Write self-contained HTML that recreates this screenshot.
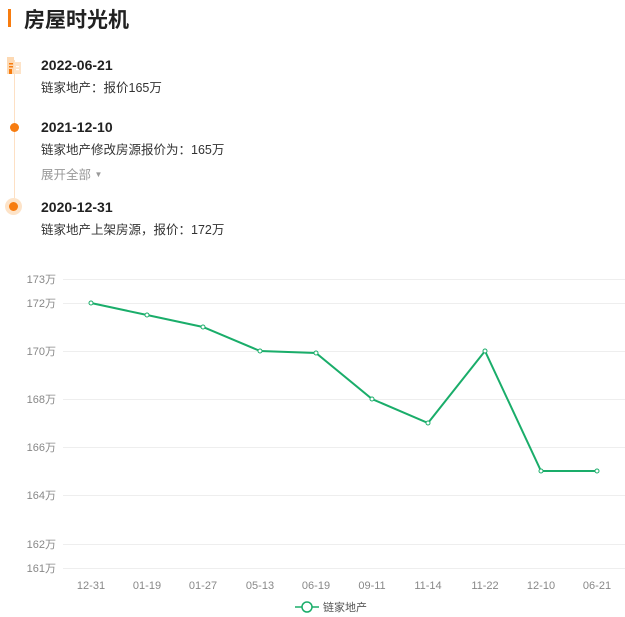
<!DOCTYPE html>
<html><head><meta charset="utf-8"><style>
body{margin:0;width:625px;height:617px;background:#fff;font-family:"Liberation Sans","Noto Sans CJK SC",sans-serif;position:relative;overflow:hidden}
.a{position:absolute;white-space:nowrap}
.d{font-weight:bold;font-size:14px;color:#222}
.t{font-size:12.5px;color:#333}
</style></head><body>
<div class="a" style="left:8px;top:9px;width:3px;height:18px;background:#f77c0f"></div>
<div class="a" style="left:24px;top:4px;font-size:21px;font-weight:bold;color:#222">房屋时光机</div>
<div class="a" style="left:14px;top:60px;width:1px;height:145px;background:#fde0c4"></div>
<svg class="a" style="left:5px;top:55px" width="18" height="20"><rect x="2" y="2" width="7" height="17" fill="#fdd9b3"/><rect x="9" y="7" width="7" height="12" fill="#fde3c8"/><rect x="4" y="8" width="4" height="1.5" fill="#f77c0f"/><rect x="4" y="11" width="4" height="1.5" fill="#f77c0f"/><rect x="4" y="14" width="3" height="5" fill="#f77c0f"/><rect x="11" y="11" width="3" height="1.2" fill="#fff"/><rect x="11" y="14" width="3" height="1.2" fill="#fff"/></svg>
<div class="a" style="left:10px;top:123px;width:9px;height:9px;border-radius:50%;background:#f77c0f"></div>
<div class="a" style="left:5px;top:198px;width:17px;height:17px;border-radius:50%;background:#fde3c8"></div>
<div class="a" style="left:9px;top:202px;width:9px;height:9px;border-radius:50%;background:#f77c0f"></div>
<div class="a d" style="left:41px;top:57px">2022-06-21</div>
<div class="a t" style="left:41px;top:77px">链家地产：报价165万</div>
<div class="a d" style="left:41px;top:119px">2021-12-10</div>
<div class="a t" style="left:41px;top:139px">链家地产修改房源报价为：165万</div>
<div class="a" style="left:41px;top:164px;font-size:12.5px;color:#999">展开全部 <span style="font-size:8px;vertical-align:2px">▼</span></div>
<div class="a d" style="left:41px;top:199px">2020-12-31</div>
<div class="a t" style="left:41px;top:219px">链家地产上架房源，报价：172万</div>
<svg class="a" style="left:0;top:0" width="625" height="617" font-family="Liberation Sans,Noto Sans CJK SC,sans-serif">
<g stroke="#eee" stroke-width="1">
<line x1="63" x2="625" y1="279.5" y2="279.5"/><line x1="63" x2="625" y1="303.5" y2="303.5"/><line x1="63" x2="625" y1="351.5" y2="351.5"/><line x1="63" x2="625" y1="399.5" y2="399.5"/><line x1="63" x2="625" y1="447.5" y2="447.5"/><line x1="63" x2="625" y1="495.5" y2="495.5"/><line x1="63" x2="625" y1="544.5" y2="544.5"/><line x1="63" x2="625" y1="568.5" y2="568.5"/>
</g>
<g fill="#888" font-size="11" text-anchor="end">
<text x="56" y="283">173万</text><text x="56" y="307">172万</text><text x="56" y="355">170万</text><text x="56" y="403">168万</text><text x="56" y="451">166万</text><text x="56" y="499">164万</text><text x="56" y="548">162万</text><text x="56" y="572">161万</text>
</g>
<g fill="#888" font-size="11" text-anchor="middle">
<text x="91" y="589">12-31</text><text x="147" y="589">01-19</text><text x="203" y="589">01-27</text><text x="260" y="589">05-13</text><text x="316" y="589">06-19</text><text x="372" y="589">09-11</text><text x="428" y="589">11-14</text><text x="485" y="589">11-22</text><text x="541" y="589">12-10</text><text x="597" y="589">06-21</text>
</g>
<polyline fill="none" stroke="#1aad6a" stroke-width="2" points="91,303 147,315 203,327 260,351 316,353 372,399 428,423 485,351 541,471 597,471"/>
<g fill="#fff" stroke="#1aad6a" stroke-width="1">
<circle cx="91" cy="303" r="2"/><circle cx="147" cy="315" r="2"/><circle cx="203" cy="327" r="2"/><circle cx="260" cy="351" r="2"/><circle cx="316" cy="353" r="2"/><circle cx="372" cy="399" r="2"/><circle cx="428" cy="423" r="2"/><circle cx="485" cy="351" r="2"/><circle cx="541" cy="471" r="2"/><circle cx="597" cy="471" r="2"/>
</g>
<line x1="295" x2="319" y1="607" y2="607" stroke="#1aad6a" stroke-width="1.5"/>
<circle cx="307" cy="607" r="5" fill="#fff" stroke="#1aad6a" stroke-width="1.5"/>
<text x="323" y="611" font-size="11" fill="#555">链家地产</text>
</svg>
</body></html>
